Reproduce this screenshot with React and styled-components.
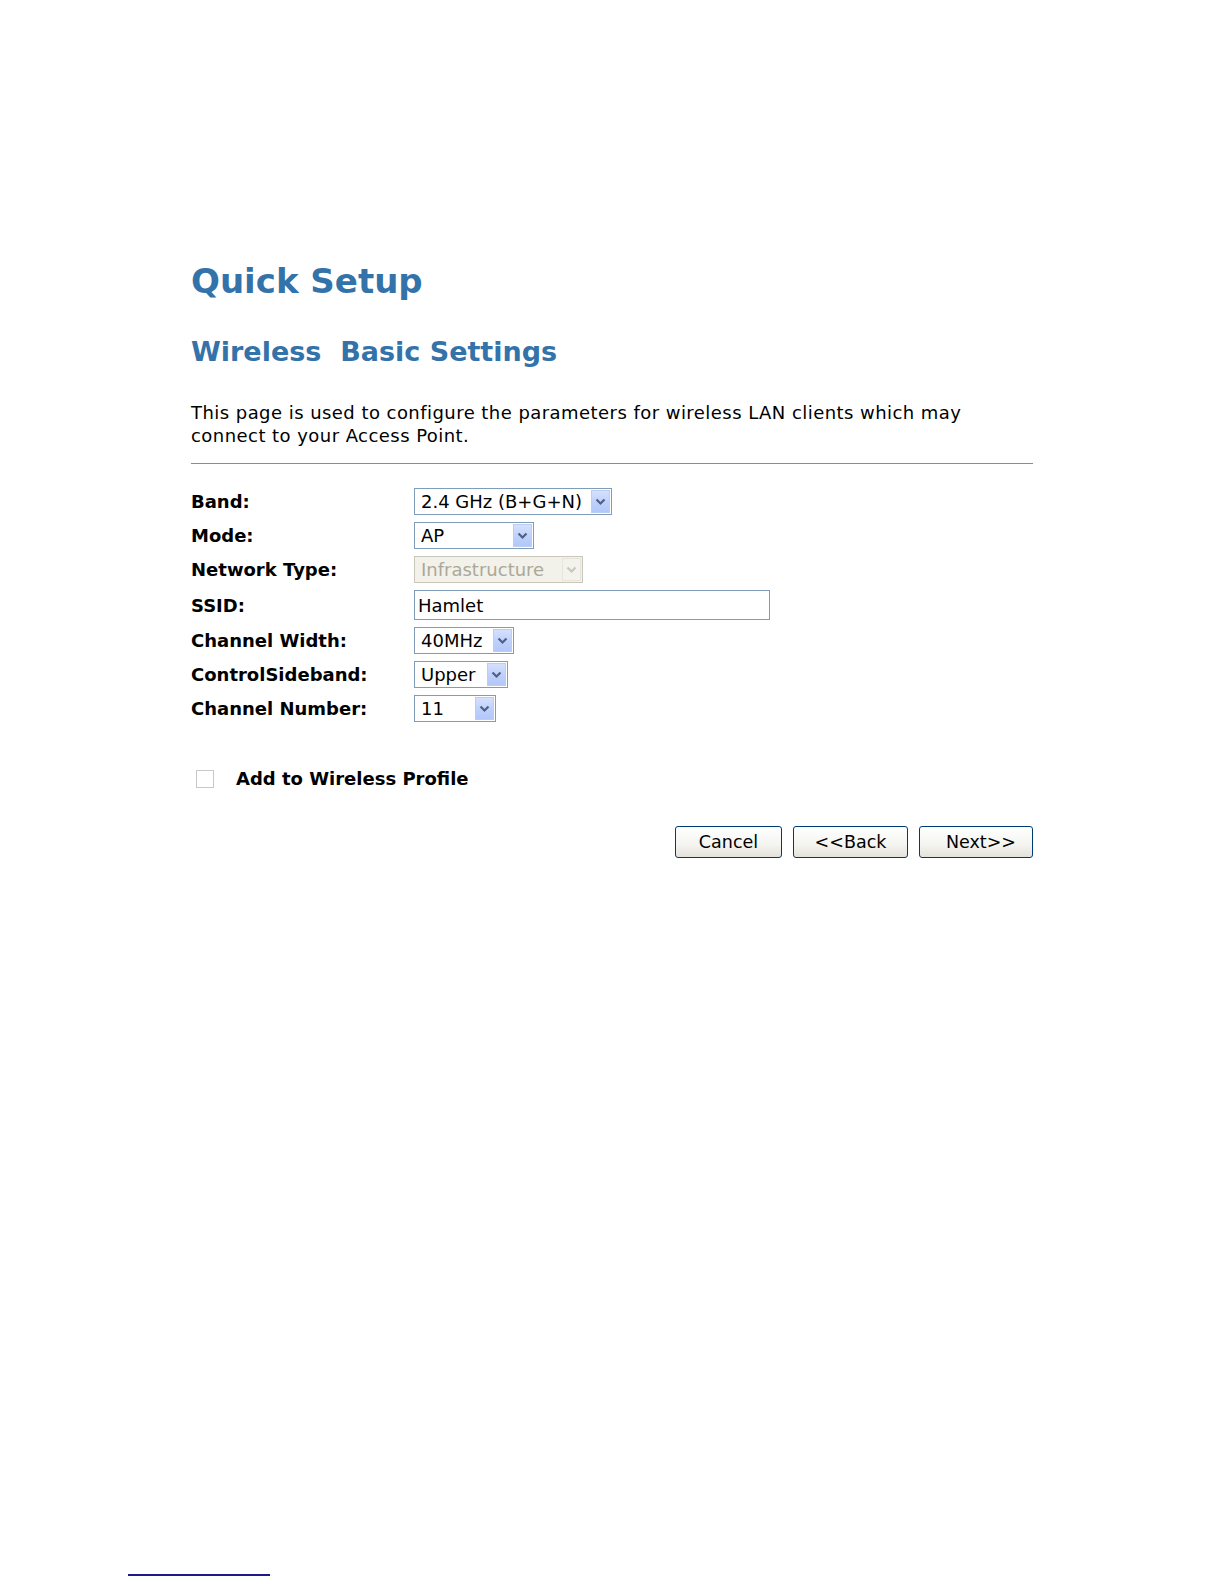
import styled, { createGlobalStyle } from "styled-components";

const GlobalStyle = createGlobalStyle`
  html, body {
    margin: 0;
    padding: 0;
    background: #fff;
  }
  body {
    font-family: "DejaVu Sans", Verdana, sans-serif;
    color: #000;
  }
`;

const Page = styled.div`
  width: 1224px;
  min-height: 1584px;
  box-sizing: border-box;
  padding: 261px 0 0 191px;
  position: relative;
`;

const Content = styled.div`
  width: 842px;
`;

const Title = styled.h1`
  margin: 0;
  font-size: 34px;
  line-height: 40px;
  font-weight: bold;
  color: #3473a9;
`;

const SubTitle = styled.h2`
  margin: 34px 0 0;
  font-size: 27px;
  line-height: 33px;
  font-weight: bold;
  color: #3473a9;
  white-space: pre;
`;

const Intro = styled.p`
  margin: 33px 0 0;
  font-size: 18px;
  line-height: 23px;
  letter-spacing: 0.45px;
`;

const Rule = styled.hr`
  margin: 16px 0 0;
  border: 0;
  height: 1px;
  background: #8c8c8c;
`;

const Form = styled.div`
  margin-top: 24px;
  display: grid;
  grid-template-columns: 223px auto;
  row-gap: 7px;
  align-items: center;
`;

const Label = styled.div`
  font-size: 18px;
  font-weight: bold;
`;

const SelectBox = styled.div`
  width: ${(p) => p.$w}px;
  height: 27px;
  box-sizing: border-box;
  border: 1px solid ${(p) => (p.$disabled ? "#c9c7ba" : "#7f9db9")};
  background: ${(p) => (p.$disabled ? "#f2f1ea" : "#fff")};
  color: ${(p) => (p.$disabled ? "#aca899" : "#000")};
  display: flex;
  align-items: center;
  font-size: 18px;
  padding: 1px;
`;

const SelectText = styled.span`
  flex: 1;
  padding-left: 5px;
  white-space: nowrap;
  overflow: hidden;
`;

const ArrowButton = styled.span`
  width: 19px;
  height: 100%;
  box-sizing: border-box;
  display: flex;
  align-items: center;
  justify-content: center;
  border: 1px solid ${(p) => (p.$disabled ? "#e6e4dc" : "#bccdf4")};
  background: ${(p) =>
    p.$disabled
      ? "#f3f2ec"
      : "linear-gradient(180deg, #d4e0fd 0%, #bccffb 60%, #b3c8f8 100%)"};
`;

const TextInput = styled.div`
  width: 356px;
  height: 30px;
  box-sizing: border-box;
  border: 1px solid #7f9db9;
  display: flex;
  align-items: center;
  padding-left: 3px;
  font-size: 18px;
`;

const CheckRow = styled.div`
  margin-top: 46px;
  display: flex;
  align-items: center;
  gap: 22px;
  padding-left: 5px;
`;

const CheckBox = styled.span`
  width: 18px;
  height: 18px;
  box-sizing: border-box;
  border: 1px solid #c8c8c8;
  background: #fff;
`;

const CheckLabel = styled.span`
  font-size: 18px;
  font-weight: bold;
`;

const Buttons = styled.div`
  margin-top: 37px;
  display: flex;
  justify-content: flex-end;
  gap: 11px;
`;

const Button = styled.button`
  width: ${(p) => p.$w}px;
  height: 32px;
  box-sizing: border-box;
  border: 1px solid #003c74;
  border-radius: 3px;
  background: linear-gradient(180deg, #ffffff 0%, #f4f4f0 60%, #e3e2da 100%);
  font-family: "DejaVu Sans", Verdana, sans-serif;
  font-size: 17.5px;
  color: #000;
  padding: 0;
  text-align: ${(p) => (p.$right ? "right" : "center")};
  padding-right: ${(p) => (p.$right ? "16px" : "0")};
`;

const FootLine = styled.div`
  position: absolute;
  left: 128px;
  top: 1574px;
  width: 142px;
  height: 2px;
  background: #1a1a8c;
`;

function Chevron({ disabled }) {
  return (
    <svg width="11" height="8" viewBox="0 0 11 8">
      <path
        d="M1.5 1.5 L5.5 5.5 L9.5 1.5"
        fill="none"
        stroke={disabled ? "#c9c7ba" : "#4d6185"}
        strokeWidth="2.2"
      />
    </svg>
  );
}

function Select({ value, width, disabled }) {
  return (
    <SelectBox $w={width} $disabled={disabled}>
      <SelectText>{value}</SelectText>
      <ArrowButton $disabled={disabled}>
        <Chevron disabled={disabled} />
      </ArrowButton>
    </SelectBox>
  );
}

export default function App() {
  return (
    <Page>
      <GlobalStyle />
      <Content>
        <Title>Quick Setup</Title>
        <SubTitle>{"Wireless  Basic Settings"}</SubTitle>
        <Intro>
          This page is used to configure the parameters for wireless LAN clients which may
          <br />
          connect to your Access Point.
        </Intro>
        <Rule />
        <Form>
          <Label>Band:</Label>
          <Select value="2.4 GHz (B+G+N)" width={198} />
          <Label>Mode:</Label>
          <Select value="AP" width={120} />
          <Label>Network Type:</Label>
          <Select value="Infrastructure" width={169} disabled />
          <Label>SSID:</Label>
          <TextInput>Hamlet</TextInput>
          <Label>Channel Width:</Label>
          <Select value="40MHz" width={100} />
          <Label>ControlSideband:</Label>
          <Select value="Upper" width={94} />
          <Label>Channel Number:</Label>
          <Select value="11" width={82} />
        </Form>
        <CheckRow>
          <CheckBox />
          <CheckLabel>Add to Wireless Profile</CheckLabel>
        </CheckRow>
        <Buttons>
          <Button $w={107}>Cancel</Button>
          <Button $w={115}>&lt;&lt;Back</Button>
          <Button $w={114} $right>Next&gt;&gt;</Button>
        </Buttons>
      </Content>
      <FootLine />
    </Page>
  );
}
